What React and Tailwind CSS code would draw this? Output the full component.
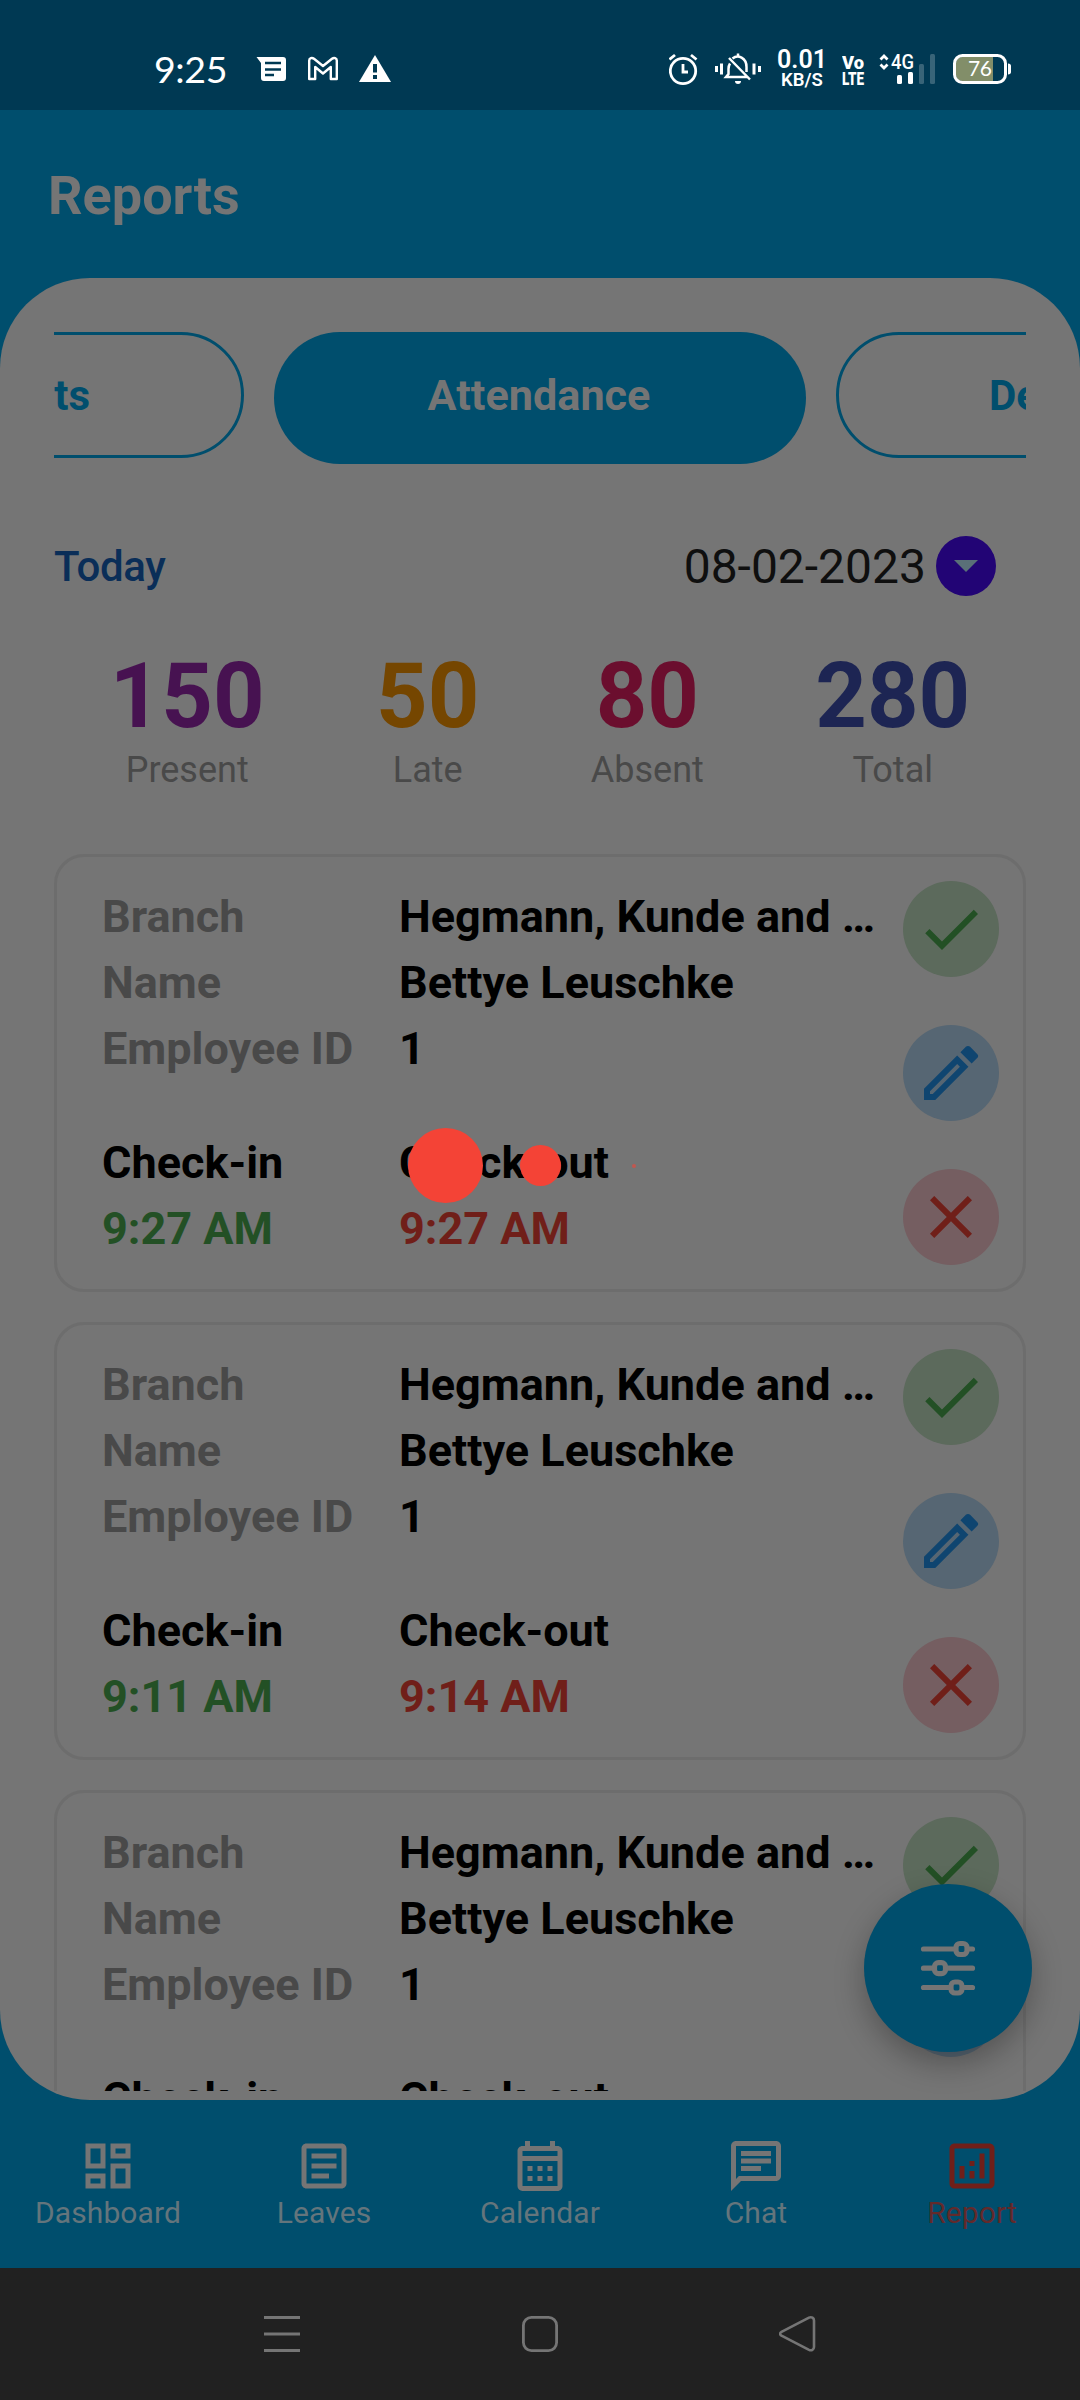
import clsx from 'clsx'
import {
  MdCheck,
  MdClose,
  MdOutlineAnalytics,
  MdOutlineArticle,
  MdOutlineCalendarMonth,
  MdOutlineChat,
  MdOutlineDashboard,
  MdOutlineEdit,
} from 'react-icons/md'

const STATS = [
  { value: 150, label: 'Present', color: 'text-[#471251]' },
  { value: 50, label: 'Late', color: 'text-[#754600]' },
  { value: 80, label: 'Absent', color: 'text-[#6b0e2e]' },
  { value: 280, label: 'Total', color: 'text-[#1d2553]' },
]

const RECORDS = [
  { id: 1, branch: 'Hegmann, Kunde and Sons', name: 'Bettye Leuschke', employeeId: 1, checkIn: '9:27 AM', checkOut: '9:27 AM' },
  { id: 2, branch: 'Hegmann, Kunde and Sons', name: 'Bettye Leuschke', employeeId: 1, checkIn: '9:11 AM', checkOut: '9:14 AM' },
  { id: 3, branch: 'Hegmann, Kunde and Sons', name: 'Bettye Leuschke', employeeId: 1, checkIn: '9:11 AM', checkOut: '9:14 AM' },
]

const NAV_ITEMS = [
  { label: 'Dashboard', icon: MdOutlineDashboard },
  { label: 'Leaves', icon: MdOutlineArticle },
  { label: 'Calendar', icon: MdOutlineCalendarMonth },
  { label: 'Chat', icon: MdOutlineChat },
  { label: 'Report', icon: MdOutlineAnalytics, active: true },
]

function StatusBar() {
  return (
    <div className="flex h-[110px] items-start bg-[#003953] pt-[50px] pr-[69px] pl-[154px] text-white">
      <span className="w-[102px] font-['Lato',sans-serif] text-[37.5px] leading-[38px] tracking-[-0.4px]">9:25</span>

      {/* Notifications */}
      <svg width="30" height="38" viewBox="0 0 30 38" fill="currentColor">
        <path d="M0.5 7H27a3 3 0 0 1 3 3v18a3 3 0 0 1-3 3H8a3 3 0 0 1-3-3V13z" />
        <path d="M9 13h16M9 19.500h16M9 25h9" stroke="#003953" strokeWidth="2.4" />
      </svg>
      <svg className="ml-[22px]" width="30" height="38" viewBox="0 0 30 38" fill="none" stroke="currentColor" strokeWidth="2.4" strokeLinejoin="round">
        <path d="M1.200 10.500C1.200 8 4 7.200 6 8.800L15 16l9-7.200c2-1.600 4.800-.8 4.800 1.700V29h-6V17L15 23.500 7.200 17v12h-6z" />
      </svg>
      <svg className="ml-[21px]" width="32" height="38" viewBox="0 0 32 38" fill="currentColor">
        <path d="M16 5 32 32H0z" />
        <path d="M16 14v8.500M16 25v4" stroke="#003953" strokeWidth="4" />
      </svg>

      <div className="ml-auto flex items-start">
        {/* Alarm */}
        <svg width="30" height="38" viewBox="0 0 30 38" fill="none" stroke="currentColor" strokeWidth="2.800">
          <circle cx="14" cy="21" r="12.700" />
          <path d="M14 14v8h5M0.500 9.500 6 5M27.500 9.500 22 5" />
        </svg>
        {/* Vibrate, bell crossed out */}
        <svg className="ml-[16px]" width="46" height="38" viewBox="0 0 46 38" fill="none" stroke="currentColor" strokeWidth="2.500">
          <path d="M1.500 16v6M6.500 13.500v11M39 13.500v11M44.500 16v6" strokeWidth="3" />
          <path d="M15 13.500c-1 1.500-1.500 3.500-1.500 5.500v5l-2.500 3h21M17.500 8.500C23 4 31.500 8 31.500 17v5M14 8l21 21.500M23 3.500V7" />
          <path d="M20 31h6a3 3 0 0 1-6 0z" fill="currentColor" stroke="none" />
        </svg>
        <div className="ml-[17px] flex w-[48px] flex-col items-center font-['Roboto',sans-serif]">
          <span className="text-[25px] leading-[20px] font-semibold">0.01</span>
          <span className="text-[18.500px] leading-[20px] font-semibold">KB/S</span>
        </div>
        <svg className="ml-[16px] font-['Roboto',sans-serif] font-black" width="24" height="38" viewBox="0 0 24 38" fill="currentColor">
          <text x="0" y="19" fontSize="19" textLength="22" lengthAdjust="spacingAndGlyphs">Vo</text>
          <text x="0" y="34.500" fontSize="19" textLength="22" lengthAdjust="spacingAndGlyphs">LTE</text>
        </svg>
        {/* Mobile signal */}
        <svg className="ml-[13px] font-['Roboto',sans-serif]" width="58" height="38" viewBox="0 0 58 38" fill="currentColor">
          <path d="M1.500 9.500 5 6l3.500 3.500M1.500 14.500 5 18l3.500-3.500" fill="none" stroke="currentColor" strokeWidth="2.800" />
          <text x="12" y="19" fontSize="20" textLength="23" lengthAdjust="spacingAndGlyphs" className="font-medium">4G</text>
          <rect x="18" y="25" width="5" height="9" rx="1.500" />
          <rect x="29" y="22" width="5" height="12" rx="1.500" />
          <rect x="40" y="14" width="5" height="20" rx="1.500" fillOpacity="0.22" />
          <rect x="51" y="4" width="5" height="30" rx="1.500" fillOpacity="0.22" />
        </svg>
        {/* Battery */}
        <svg className="ml-[16px] font-['Lato',sans-serif]" width="58" height="38" viewBox="0 0 58 38">
          <path d="M3 13a6 6 0 0 1 6-6h31v24H9a6 6 0 0 1-6-6z" fill="#828e69" />
          <rect x="1.500" y="5.500" width="51" height="27" rx="8" fill="none" stroke="#fff" strokeWidth="3" />
          <path d="M55 13.500c2 0 3 1 3 2.500v6c0 1.500-1 2.500-3 2.500z" fill="#fff" />
          <text x="15" y="26" fontSize="21" textLength="24" fill="#fff">76</text>
        </svg>
      </div>
    </div>
  )
}

function ReportTabs() {
  return (
    <div className="flex h-[132px] items-start justify-center gap-[30px] overflow-hidden text-[42px] font-bold text-[#004e6d]">
      <div className="flex h-[126px] w-[532px] shrink-0 items-center justify-end rounded-full border-3 border-[#004e6d] pr-[151px]">
        Leave Requests
      </div>
      <div className="flex h-[132px] w-[532px] shrink-0 items-center justify-center rounded-full bg-[#004e6d] pr-0.5 pb-1 text-[43.2px] text-[#757575]">
        Attendance
      </div>
      <div className="flex h-[126px] w-[532px] shrink-0 items-center rounded-full border-3 border-[#004e6d] pl-[150px]">
        Departments
      </div>
    </div>
  )
}

function ActionButton({ icon: Icon, className }) {
  return (
    <button className={clsx('flex size-24 items-center justify-center rounded-full', className)}>
      <Icon className="size-[72px]" />
    </button>
  )
}

function Field({ label, value }) {
  return (
    <div className="flex">
      <span className="w-[297px] shrink-0 text-[#494949]">{label}</span>
      <span className="truncate">{value}</span>
    </div>
  )
}

function RecordCard({ record }) {
  return (
    <div className="flex h-[438px] shrink-0 rounded-[30px] border-3 border-[#6d6d6d] pt-6 pr-6 pl-[45px]">
      <div className="min-w-0 flex-1 pt-[3px] pr-6 text-[45px] leading-[66px] font-bold text-black">
        <Field label="Branch" value={record.branch} />
        <Field label="Name" value={record.name} />
        <Field label="Employee ID" value={record.employeeId} />
        <div className="mt-12 flex">
          <div className="w-[297px]">
            <p>Check-in</p>
            <p className="text-[#235025]">{record.checkIn}</p>
          </div>
          <div>
            <p>Check-out</p>
            <p className="text-[#701f19]">{record.checkOut}</p>
          </div>
        </div>
      </div>
      <div className="flex flex-col gap-12">
        <ActionButton icon={MdCheck} className="bg-[#5c6a5c] text-[#235025]" />
        <ActionButton icon={MdOutlineEdit} className="bg-[#566673] text-[#0f4570]" />
        <ActionButton icon={MdClose} className="bg-[#755e61] text-[#701f19]" />
      </div>
    </div>
  )
}

function FilterButton() {
  return (
    <button className="absolute right-12 bottom-12 flex size-[168px] items-center justify-center rounded-full bg-[#004e6d] text-[#757575] shadow-[0_12px_30px_0_rgba(0,0,0,0.28)]">
      <svg width="56" height="56" viewBox="0 0 56 56" fill="none" stroke="currentColor" strokeWidth="5.200" strokeLinecap="round">
        <path d="M3.500 9H34M49 9h3.500M3.500 28.200H13M27 28.200h25.500M3.500 47.500H29M43 47.500h9.500" />
        <rect x="36" y="3.500" width="11" height="11" rx="4" />
        <rect x="14.500" y="22.700" width="11" height="11" rx="4" />
        <rect x="31" y="42" width="11" height="11" rx="4" />
      </svg>
    </button>
  )
}

function BottomNav() {
  return (
    <nav className="flex h-[168px] pt-9">
      {NAV_ITEMS.map(({ label, icon: Icon, active }) => (
        <div key={label} className={clsx('flex flex-1 flex-col items-center', active ? 'text-[#701f19]' : 'text-[#757575]')}>
          <Icon className="size-[60px]" />
          <span className={clsx('text-[30px] leading-[33px] tracking-[0.1px]', active ? 'text-[#632a2b]' : 'text-[#64757c]')}>
            {label}
          </span>
        </div>
      ))}
    </nav>
  )
}

function SystemNav() {
  return (
    <div className="flex h-[132px] items-center justify-between bg-[#212121] px-[263px] text-[#757575]">
      <svg width="38" height="38" viewBox="0 0 38 38" fill="none" stroke="currentColor" strokeWidth="3">
        <path d="M1 2.500h36M1 19h36M1 35.500h36" />
      </svg>
      <svg width="38" height="38" viewBox="0 0 38 38" fill="none" stroke="currentColor" strokeWidth="2.800">
        <rect x="2.400" y="2.400" width="33.200" height="33.200" rx="8" />
      </svg>
      <svg width="38" height="38" viewBox="0 0 38 38" fill="none" stroke="currentColor" strokeWidth="2.600">
        <path d="M2.500 16.800 30 2.700c2.500-1.200 5 .3 5 2.800v26.500c0 2.500-2.500 4-5 2.800L2.500 20.700c-1.800-1-1.800-3 0-3.900z" />
      </svg>
    </div>
  )
}

export default function App() {
  return (
    <div className="relative flex h-[2400px] w-[1080px] flex-col overflow-hidden bg-[#004e6d] font-['Roboto',sans-serif]">
      <StatusBar />
      <header className="flex h-[168px] items-center pt-0.5 pl-12 text-[54px] font-bold text-[#757575]">
        <h1>Reports</h1>
      </header>

      <main className="relative flex h-[1822px] flex-col overflow-hidden rounded-[90px] bg-[#757575] px-[54px] pt-[54px] pb-[9px]">
        <ReportTabs />

        <div className="mt-[72px] flex h-[60px] items-center justify-between pr-[30px]">
          <span className="text-[42px] font-medium tracking-[-0.3px] text-[#0a2e58]">Today</span>
          <div className="flex items-center gap-2.5 text-[48px] text-[#0f0f0f]">
            <span className="pt-0.5">08-02-2023</span>
            <span className="flex size-[60px] items-center justify-center rounded-full bg-[#220475]">
              <svg width="24" height="12" viewBox="0 0 24 12" fill="#5a7078">
                <path d="M0 0h24L12 12z" />
              </svg>
            </span>
          </div>
        </div>

        <div className="mt-[48px] flex h-[210px] justify-around">
          {STATS.map((s) => (
            <div key={s.label} className="flex flex-col items-center">
              <span className={clsx('text-[90px] leading-[105px] font-bold', s.color)}>{s.value}</span>
              <span className="text-[36px] leading-[42px] text-[#494949]">{s.label}</span>
            </div>
          ))}
        </div>

        <div className="flex min-h-0 flex-1 flex-col gap-[30px] overflow-hidden">
          {RECORDS.map((r) => (
            <RecordCard key={r.id} record={r} />
          ))}
        </div>

        <FilterButton />
      </main>

      <BottomNav />
      <SystemNav />

      {/* Loading indicator over the dimmed page */}
      <div className="absolute top-[1128px] left-[408px] flex h-[75px] items-center">
        <span className="size-[75px] rounded-full bg-[#f44336]" />
        <span className="ml-[37px] size-[41px] rounded-full bg-[#f44336]" />
        <span className="ml-[71px] size-[4px] rounded-full bg-[#f44336]/60" />
      </div>
    </div>
  )
}
